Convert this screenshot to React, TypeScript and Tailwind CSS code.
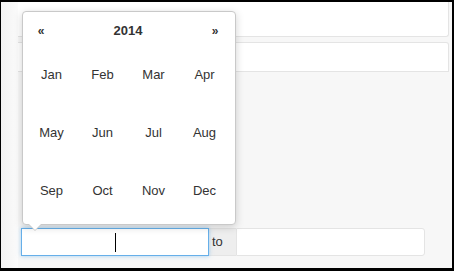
const months = ['Jan', 'Feb', 'Mar', 'Apr', 'May', 'Jun', 'Jul', 'Aug', 'Sep', 'Oct', 'Nov', 'Dec'];

function MonthPicker() {
  return (
    <div className="absolute left-[21px] top-[9px] w-[214px] rounded-[4px] border border-[#c9c9c9] bg-white pl-[3px] pr-[5px] pt-[3px] pb-[4px] shadow-[0_2px_8px_rgba(0,0,0,0.18)]">
      <div className="grid h-[31px] grid-cols-[30px_1fr_30px] items-center text-[13px] text-[#333]">
        <span className="text-center text-[12px] font-bold">«</span>
        <span className="text-center font-bold">2014</span>
        <span className="text-center text-[12px] font-bold">»</span>
      </div>
      <div className="grid grid-cols-4">
        {months.map((m) => (
          <span key={m} className="flex h-[58px] items-center justify-center text-[13px] text-[#333]">
            {m}
          </span>
        ))}
      </div>
      {/* caret pointing down to the input */}
      <div className="absolute bottom-[-7px] left-[5px] h-0 w-0 border-x-[7px] border-t-[7px] border-x-transparent border-t-[#c9c9c9]" />
      <div className="absolute bottom-[-6px] left-[6px] h-0 w-0 border-x-[6px] border-t-[6px] border-x-transparent border-t-white" />
    </div>
  );
}

export default function App() {
  return (
    <div
      className="relative h-[271px] w-[454px] overflow-hidden border-t-2 border-r-2 border-b-[3px] border-l border-black bg-[#f7f7f7]"
      style={{ fontFamily: '"Liberation Sans", Arial, sans-serif' }}
    >
      <div className="flex h-full">
        <div className="w-[17px] bg-gradient-to-r from-[#f2f2f2] to-[#fbfbfb]" />
        <div className="flex flex-1 flex-col">
          <div className="mr-[3px] h-[35px] rounded-br-[3px] border-r border-b border-[#e4e4e4] bg-white" />
          <div className="mt-[5px] mr-[3px] h-[30px] rounded-tr-[3px] border-t border-r border-b border-[#e4e4e4] bg-white" />
          <div className="flex-1" />
          <div className="mb-[12px] ml-[3px] flex h-[28px] w-[404px]">
            <div className="relative w-[188px] border border-[#66afe9] bg-white shadow-[0_0_4px_rgba(102,175,233,0.6)]">
              <div className="absolute left-[93px] top-[4px] h-[19px] w-px bg-black" />
            </div>
            <div className="flex w-[27px] items-center border-y border-[#e4e4e4] bg-[#eeeeee] pl-[3px] text-[13px] text-[#333]">
              to
            </div>
            <div className="flex-1 rounded-r-[3px] border border-[#e4e4e4] bg-white" />
          </div>
        </div>
      </div>
      <MonthPicker />
    </div>
  );
}
